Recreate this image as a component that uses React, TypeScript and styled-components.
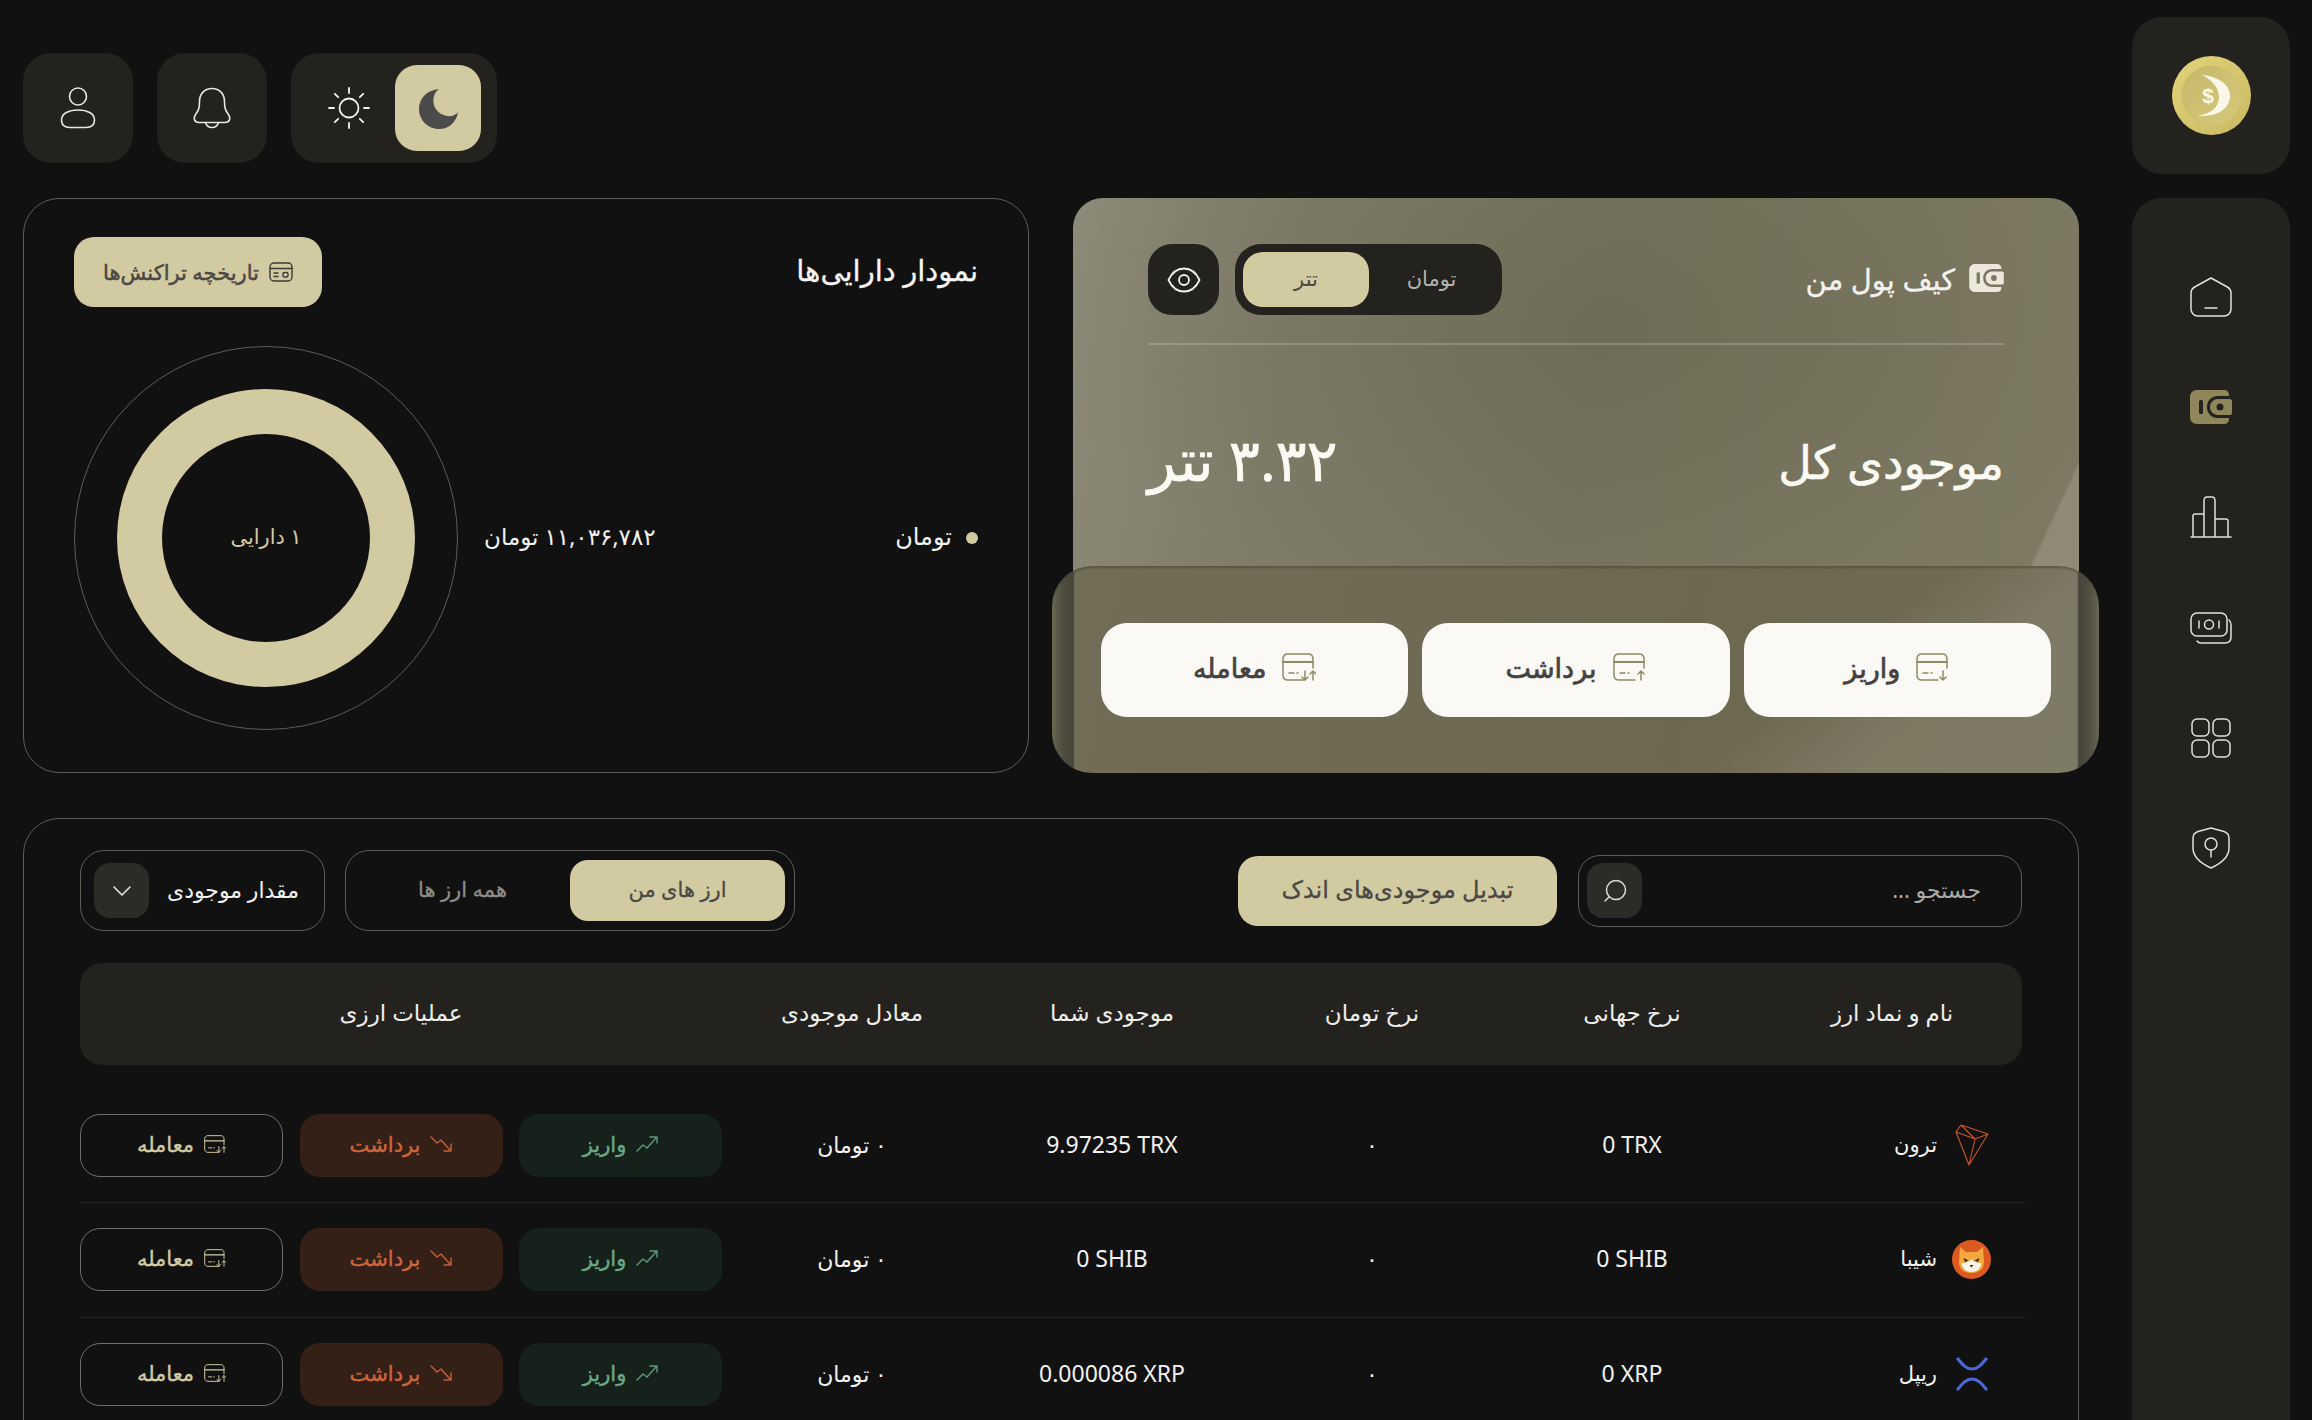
import React from "react";
import styled, { createGlobalStyle } from "styled-components";

const FONT = `"Noto Sans", "DejaVu Sans", sans-serif`;
const ACCENT = "#d2cba2";
const PANEL = "#23221e";
const LINE = "#5c5c58";

const Global = createGlobalStyle`
  html, body { margin: 0; padding: 0; background: #111111; overflow: hidden; }
  body { font-family: ${FONT}; color: #f2f2f0; }
  * { box-sizing: border-box; }
`;

const Page = styled.div`
  direction: rtl;
  width: 2312px;
  height: 1420px;
  overflow: hidden;
  display: grid;
  grid-template-columns: 158px 2056px;
  column-gap: 53px;
  padding: 17px 22px 0 23px;
  background: #111111;
`;

const Sidebar = styled.aside`
  display: flex;
  flex-direction: column;
  gap: 24px;
  height: 1500px;
`;

const LogoCard = styled.div`
  height: 157px;
  border-radius: 30px;
  background: ${PANEL};
  display: flex;
  align-items: center;
  justify-content: center;
`;

const NavCard = styled.nav`
  flex: 1;
  border-radius: 30px;
  background: ${PANEL};
  padding-top: 77px;
  display: flex;
  flex-direction: column;
  align-items: center;
  gap: 66.2px;
`;

const NavSlot = styled.div`
  width: 44px;
  height: 44px;
  display: flex;
  align-items: center;
  justify-content: center;
`;

const Main = styled.main`
  padding-top: 36px;
  display: flex;
  flex-direction: column;
`;

const Header = styled.header`
  height: 110px;
  display: flex;
  gap: 24px;
  justify-content: flex-end;
  margin-bottom: 35px;
`;

const IconTile = styled.button`
  width: 110px;
  height: 110px;
  border: 0;
  padding: 0;
  border-radius: 28px;
  background: ${PANEL};
  display: flex;
  align-items: center;
  justify-content: center;
`;

const ThemeTile = styled.div`
  width: 206px;
  height: 110px;
  border-radius: 28px;
  background: ${PANEL};
  padding: 12px 16px 12px 12px;
  display: flex;
  align-items: center;
`;

const MoonBox = styled.div`
  width: 86px;
  height: 86px;
  border-radius: 22px;
  background: ${ACCENT};
  display: flex;
  align-items: center;
  justify-content: center;
`;

const SunBox = styled.div`
  flex: 1;
  display: flex;
  align-items: center;
  justify-content: center;
`;

const TopRow = styled.section`
  height: 575px;
  display: grid;
  grid-template-columns: 1006px 1006px;
  column-gap: 44px;
  margin-bottom: 45px;
`;

const WalletCard = styled.div`
  border-radius: 30px;
  display: flex;
  flex-direction: column;
  background:
    linear-gradient(115deg, transparent 88.5%, rgba(255, 255, 255, 0.13) 88.8%),
    radial-gradient(ellipse 560px 300px at 52% 22%, rgba(60, 58, 35, 0.16), transparent 100%),
    linear-gradient(100deg, #8c8a78 0%, #7f7c68 22%, #787660 50%, #7e7a63 100%);
`;

const WalletTop = styled.div`
  flex: 1;
  padding: 46px 75px 0;
  display: flex;
  flex-direction: column;
`;

const WalletHead = styled.div`
  height: 71px;
  display: flex;
  align-items: center;
  justify-content: space-between;
`;

const WalletTitle = styled.div`
  display: flex;
  align-items: center;
  gap: 14px;
  font-size: 29px;
  -webkit-text-stroke: 0.3px currentColor;
  padding-bottom: 3px;
`;

const Controls = styled.div`
  display: flex;
  gap: 16px;
`;

const Segment = styled.div`
  width: 267px;
  height: 71px;
  border-radius: 26px;
  background: ${PANEL};
  padding: 8px;
  display: flex;
  align-items: center;
`;

const SegmentItem = styled.div<{ $active?: boolean }>`
  flex: ${(p) => (p.$active ? "0 0 126px" : "1")};
  height: 55px;
  border-radius: 20px;
  background: ${(p) => (p.$active ? ACCENT : "transparent")};
  color: ${(p) => (p.$active ? "#4a4845" : "#b4b4ae")};
  font-size: 21px;
  padding-bottom: 3px;
  display: flex;
  align-items: center;
  justify-content: center;
`;

const EyeButton = styled.button`
  width: 71px;
  height: 71px;
  border: 0;
  padding: 0;
  border-radius: 24px;
  background: ${PANEL};
  display: flex;
  align-items: center;
  justify-content: center;
`;

const Divider = styled.div`
  height: 2px;
  margin-top: 28px;
  background: rgba(255, 255, 255, 0.18);
`;

const Balance = styled.div`
  flex: 1;
  display: flex;
  align-items: center;
  justify-content: space-between;
  padding-top: 6px;
`;

const BalanceLabel = styled.div`
  font-size: 46px;
  color: #fbfaf5;
  -webkit-text-stroke: 0.6px currentColor;
  padding-top: 4px;
`;

const BalanceValue = styled.div`
  font-size: 58px;
  color: #fbfaf5;
  -webkit-text-stroke: 0.7px currentColor;
`;

const Glass = styled.div`
  height: 207px;
  margin: 0 -20px 0 -21px;
  padding: 0 48px 0 49px;
  border-radius: 40px;
  display: grid;
  grid-template-columns: repeat(3, 1fr);
  column-gap: 14px;
  align-items: center;
  background:
    linear-gradient(
      90deg,
      #6d6c5a 0,
      #5a5949 5px,
      #4d4c3e 12px,
      #454438 21px,
      transparent 23px,
      transparent calc(100% - 22px),
      #454438 calc(100% - 20px),
      #4d4c3e calc(100% - 12px),
      #5a5949 calc(100% - 5px),
      #6d6c5a 100%
    ),
    linear-gradient(141deg, transparent 69%, rgba(255, 255, 255, 0.1) 81%),
    linear-gradient(100deg, #716d56 0%, #6d6951 60%, #6f6b54 100%);
  box-shadow: inset 0 2px 2px rgba(70, 66, 44, 0.5);
`;

const ActionButton = styled.button`
  height: 94px;
  border: 0;
  border-radius: 26px;
  background: #faf9f5;
  color: #444241;
  font-family: ${FONT};
  font-size: 27px;
  -webkit-text-stroke: 0.7px currentColor;
  padding: 0 0 5px;
  display: flex;
  align-items: center;
  justify-content: center;
  gap: 16px;
`;

const AssetCard = styled.div`
  border: 1px solid ${LINE};
  border-radius: 36px;
  padding: 38px 50px 0;
  display: flex;
  flex-direction: column;
  gap: 39px;
`;

const AssetHead = styled.div`
  height: 70px;
  display: flex;
  align-items: center;
  justify-content: space-between;
`;

const AssetTitle = styled.h2`
  margin: 0 0 5px;
  font-size: 29px;
  font-weight: 400;
  -webkit-text-stroke: 0.3px currentColor;
  color: #f7f7f5;
`;

const HistoryButton = styled.button`
  width: 248px;
  height: 70px;
  border: 0;
  border-radius: 20px;
  background: ${ACCENT};
  color: #4a4845;
  font-family: ${FONT};
  font-size: 21px;
  -webkit-text-stroke: 0.5px currentColor;
  padding: 0;
  display: flex;
  align-items: center;
  justify-content: center;
  gap: 10px;
`;

const ChartRow = styled.div`
  display: flex;
  align-items: center;
  justify-content: space-between;
`;

const Legend = styled.div`
  display: flex;
  align-items: center;
  gap: 14px;
  font-size: 24px;
  padding-bottom: 5px;
`;

const Dot = styled.span`
  width: 12px;
  height: 12px;
  border-radius: 50%;
  margin-top: 5px;
  background: ${ACCENT};
`;

const ChartGroup = styled.div`
  display: flex;
  align-items: center;
  gap: 26px;
  font-size: 23px;
`;

const ChartValue = styled.span`
  padding-bottom: 5px;
`;

const DonutOuter = styled.div`
  width: 384px;
  height: 384px;
  border-radius: 50%;
  border: 1px solid ${LINE};
  display: flex;
  align-items: center;
  justify-content: center;
`;

const DonutRing = styled.div`
  width: 298px;
  height: 298px;
  border-radius: 50%;
  background: ${ACCENT};
  display: flex;
  align-items: center;
  justify-content: center;
`;

const DonutHole = styled.div`
  width: 208px;
  height: 208px;
  border-radius: 50%;
  background: #111111;
  color: ${ACCENT};
  font-size: 21px;
  padding-bottom: 4px;
  display: flex;
  align-items: center;
  justify-content: center;
`;

const TableCard = styled.section`
  border: 1px solid ${LINE};
  border-radius: 36px;
  padding: 31px 56px 60px;
  height: 800px;
`;

const Toolbar = styled.div`
  height: 81px;
  display: flex;
  align-items: center;
  margin-bottom: 32px;
`;

const SearchBox = styled.div`
  width: 444px;
  height: 72px;
  border: 1px solid ${LINE};
  border-radius: 22px;
  padding: 0 40px 0 8px;
  display: flex;
  align-items: center;
  justify-content: space-between;
  color: #aaaaa6;
  font-size: 22px;
`;

const LiftedText = styled.span`
  padding-bottom: 3px;
`;

const SquareIcon = styled.div`
  width: 55px;
  height: 55px;
  border-radius: 16px;
  background: #2b2b27;
  display: flex;
  align-items: center;
  justify-content: center;
`;

const ConvertButton = styled.button`
  width: 319px;
  height: 70px;
  margin-right: 21px;
  border: 0;
  border-radius: 20px;
  background: ${ACCENT};
  color: #4a4845;
  font-family: ${FONT};
  font-size: 24px;
  padding: 0 0 4px;
  -webkit-text-stroke: 0.3px currentColor;
`;

const Tabs = styled.div`
  width: 450px;
  height: 81px;
  margin-right: auto;
  border: 1px solid ${LINE};
  border-radius: 24px;
  padding: 9px;
  display: flex;
  align-items: center;
`;

const TabItem = styled.div<{ $active?: boolean }>`
  flex: ${(p) => (p.$active ? "0 0 215px" : "1")};
  height: 61px;
  border-radius: 18px;
  background: ${(p) => (p.$active ? ACCENT : "transparent")};
  color: ${(p) => (p.$active ? "#4a4845" : "#8c8c88")};
  font-size: 21px;
  -webkit-text-stroke: 0.3px currentColor;
  padding-bottom: 3px;
  display: flex;
  align-items: center;
  justify-content: center;
`;

const SelectBox = styled.div`
  width: 245px;
  height: 81px;
  margin-right: 20px;
  border: 1px solid ${LINE};
  border-radius: 24px;
  padding: 0 25px 0 13px;
  display: flex;
  align-items: center;
  justify-content: space-between;
  font-size: 22px;
`;

const TableGrid = styled.div`
  display: grid;
  grid-template-columns: repeat(5, 260px) 1fr;
  align-items: center;
`;

const TableHead = styled(TableGrid)`
  height: 102px;
  margin-bottom: 23.5px;
  border-radius: 22px;
  background: ${PANEL};
  font-size: 23px;
  color: #eeeeea;
  padding-bottom: 5px;
`;

const HeadCell = styled.div`
  text-align: center;
`;

const Row = styled(TableGrid)`
  height: 114.5px;
  margin-right: -3px;
  padding-right: 3px;
  border-bottom: 1px solid #262624;
  font-size: 22px;
`;

const Cell = styled.div`
  text-align: center;
  padding-bottom: 3px;
`;

const LatinCell = styled.div`
  direction: ltr;
  text-align: center;
  font-size: 23px;
  padding-bottom: 3px;
`;

const NameCell = styled.div`
  display: flex;
  align-items: center;
  gap: 15px;
  padding-right: 31px;
  font-size: 21px;
`;

const CoinIcon = styled.div`
  width: 39px;
  height: 39px;
  display: flex;
  align-items: center;
  justify-content: center;
`;

const Ops = styled.div`
  display: grid;
  grid-template-columns: 203px 203px 203px;
  justify-content: space-between;
`;

const OpButton = styled.button<{ $kind: "in" | "out" | "trade" }>`
  height: 63px;
  border-radius: 20px;
  font-family: ${FONT};
  font-size: 21px;
  -webkit-text-stroke: 0.4px currentColor;
  padding: 0 0 3px;
  display: flex;
  align-items: center;
  justify-content: center;
  gap: 10px;
  border: ${(p) => (p.$kind === "trade" ? `1px solid #6e6e6a` : "0")};
  background: ${(p) =>
    p.$kind === "in" ? "#17211c" : p.$kind === "out" ? "#352018" : "transparent"};
  color: ${(p) =>
    p.$kind === "in" ? "#6aa985" : p.$kind === "out" ? "#d0653c" : ACCENT};
`;

const stroke = { fill: "none", strokeLinecap: "round", strokeLinejoin: "round" } as const;

const UserIcon = () => (
  <svg width="36" height="42" viewBox="0 0 36 42" {...stroke} stroke="#e6e6e2" strokeWidth="1.6">
    <ellipse cx="18" cy="9.5" rx="8.5" ry="8.5" />
    <path d="M18 23c-9 0-16.5 3.5-16.5 10C1.500 38 5 40.500 10 40.500h16c5 0 8.500-2.500 8.500-7.500 0-6.500-7.500-10-16.500-10Z" />
  </svg>
);

const BellIcon = () => (
  <svg width="40" height="42" viewBox="0 0 40 42" {...stroke} stroke="#e6e6e2" strokeWidth="1.6">
    <path d="M20 1.500C12 1.500 7.500 7.500 7.500 14.500c0 7-1 9-4 13-2.500 3.500-1.500 8 3.500 8h26c5 0 6-4.500 3.500-8-3-4-4-6-4-13C32.500 7.500 28 1.500 20 1.500Z" />
    <path d="M13.500 35.500c1 3.500 3.500 5 6.500 5s5.500-1.500 6.500-5" />
  </svg>
);

const SunIcon = () => (
  <svg width="42" height="42" viewBox="0 0 42 42" {...stroke} stroke="#f1f1ee" strokeWidth="1.8">
    <circle cx="21" cy="21" r="9.500" />
    <path d="M21 1v5M21 36v5M1 21h5M36 21h5M6.800 6.800l3.400 3.400M31.800 31.800l3.400 3.400M6.800 35.200l3.400-3.400M31.800 10.200l3.400-3.400" />
  </svg>
);

const MoonIcon = () => (
  <svg width="40" height="41" viewBox="0 0 40 41">
    <path
      fill="#4b4b4c"
      d="M21 1C9.500 2 1 10 1 21c0 11 9 20 20 20 9.500 0 17-6 19-16.500-3.500 3.500-8.500 4.500-13 3C20 25.500 16 20 15.500 14.500 15 8.500 17 4 21 1Z"
    />
  </svg>
);

const WalletGlyph = ({ color, w, h, hole }: { color: string; w: number; h: number; hole: string }) => (
  <svg width={w} height={h} viewBox="0 0 42 34">
    <path fill={color} d="M7 0h27c3 0 5 2 5 5v1H28C21 6 17 11 17 17s4 11 11 11h11v1c0 3-2 5-5 5H7c-4 0-7-3-7-7V7c0-4 3-7 7-7Z" />
    <rect x="9" y="10" width="4" height="14" rx="1.500" fill={hole} />
    <path fill={color} d="M28 9h12c1 0 2 1 2 2v12c0 1-1 2-2 2H28c-4 0-8-3-8-8s4-8 8-8Z" />
    <circle cx="30" cy="17" r="3.500" fill={hole} />
  </svg>
);

const EyeIcon = () => (
  <svg width="34" height="26" viewBox="0 0 34 26" {...stroke} stroke="#f1f1ee" strokeWidth="1.8">
    <path d="M1.500 13C5 5.500 10.500 1.500 17 1.500S29 5.500 32.500 13C29 20.500 23.500 24.500 17 24.500S5 20.500 1.500 13Z" />
    <circle cx="17" cy="13" r="5" />
  </svg>
);

type Arrow = "down" | "up" | "both";

const CardArrow = ({ dir, color, w = 34, h = 28 }: { dir: Arrow; color: string; w?: number; h?: number }) => (
  <svg width={w} height={h} viewBox="0 0 34 28" {...stroke} stroke={color} strokeWidth="1.500">
    <path d="M22 27H6c-3 0-5-2-5-5V6c0-3 2-5 5-5h20c3 0 5 2 5 5v9" />
    <path d="M1 9h30" strokeWidth="2" />
    <path d="M7 20h5M15 20h1" />
    {dir !== "up" && <path d="M25 27v-9M22 24l3 3 3-3" transform={dir === "both" ? "translate(-2 0)" : "translate(2 0)"} />}
    {dir !== "down" && <path d="M30 27v-9M27 21l3-3 3 3" transform={dir === "both" ? "translate(1 0)" : "translate(-2 0)"} />}
  </svg>
);

const HistoryIcon = () => (
  <svg width="24" height="20" viewBox="0 0 24 20" {...stroke} stroke="#3c3a36" strokeWidth="1.400">
    <rect x="1" y="1" width="22" height="18" rx="4" />
    <path d="M1 6.500h22M5 11h4M5 14.500h4" />
    <rect x="14" y="10.500" width="5" height="4.500" rx="1.500" />
  </svg>
);

const SearchIcon = () => (
  <svg width="24" height="24" viewBox="0 0 24 24" {...stroke} stroke="#ddddd8" strokeWidth="1.500">
    <circle cx="13" cy="11" r="9.500" />
    <path d="M6 18l-4 4" />
  </svg>
);

const ChevronIcon = () => (
  <svg width="20" height="12" viewBox="0 0 20 12" {...stroke} stroke="#e6e6e2" strokeWidth="1.600">
    <path d="M2 2l8 8 8-8" />
  </svg>
);

const TrendUp = () => (
  <svg width="22" height="16" viewBox="0 0 22 16" {...stroke} stroke="#5d9a78" strokeWidth="1.400">
    <path d="M1 15l6-6 4 3 9-10M14 1h7v6" />
  </svg>
);

const TrendDown = () => (
  <svg width="22" height="16" viewBox="0 0 22 16" {...stroke} stroke="#c55f38" strokeWidth="1.400">
    <path d="M1 1l6 6 4-3 9 10M14 15h7V8" />
  </svg>
);

const LogoMark = () => (
  <svg width="79" height="79" viewBox="0 0 79 79">
    <defs>
      <linearGradient id="coinEdge" x1="0" y1="0" x2="1" y2="1">
        <stop offset="0" stopColor="#e2d37a" />
        <stop offset="1" stopColor="#c9b962" />
      </linearGradient>
      <linearGradient id="coinFace" x1="0" y1="0" x2="1" y2="1">
        <stop offset="0" stopColor="#c4b86a" />
        <stop offset="1" stopColor="#d6c97c" />
      </linearGradient>
    </defs>
    <circle cx="39.500" cy="39.500" r="39.500" fill="url(#coinEdge)" />
    <circle cx="39.500" cy="39.500" r="30" fill="url(#coinFace)" />
    <path
      fill="#fbf8ea"
      d="M30 19C42 20 58 26 58 40 58 53 45 61 25 60 38 58 47 52 47 41 47 32 40 24 30 19Z"
    />
    <text x="36" y="47" fontSize="21" fontWeight="700" fill="#fbf8ea" fontFamily="Liberation Sans, sans-serif" textAnchor="middle" direction="ltr">$</text>
  </svg>
);

const HomeNav = () => (
  <svg width="42" height="40" viewBox="0 0 42 40" {...stroke} stroke="#e0e0dc" strokeWidth="1.500">
    <path d="M21 1 5.500 9.500C2.500 11 1 13 1 16v16c0 4 3 7 7 7h26c4 0 7-3 7-7V16c0-3-1.500-5-4.500-6.500L21 1Z" />
    <path d="M15 31h12" />
  </svg>
);

const BarsNav = () => (
  <svg width="42" height="42" viewBox="0 0 42 42" {...stroke} stroke="#e0e0dc" strokeWidth="1.500">
    <path d="M1 41h40M3 41V20c0-1 1-2 2-2h9M14 41V5c0-2 1-4 3-4h5c2 0 3 2 3 4v36M25 23h11c1 0 2 1 2 2v16" />
  </svg>
);

const MoneyNav = () => (
  <svg width="42" height="32" viewBox="0 0 42 32" {...stroke} stroke="#e0e0dc" strokeWidth="1.500">
    <rect x="1" y="1" width="36" height="23" rx="6" />
    <circle cx="19" cy="12.500" r="4.500" />
    <path d="M9 9v7M29 9v7M7 29c1 1.500 2 2 4 2h24c4 0 6-2.500 6-6V13c0-2-1-4-2-5" />
  </svg>
);

const GridNav = () => (
  <svg width="40" height="40" viewBox="0 0 40 40" {...stroke} stroke="#e0e0dc" strokeWidth="1.500">
    <rect x="1" y="1" width="17" height="17" rx="5" />
    <rect x="22" y="1" width="17" height="17" rx="5" />
    <rect x="1" y="22" width="17" height="17" rx="5" />
    <rect x="22" y="22" width="17" height="17" rx="5" />
  </svg>
);

const ShieldNav = () => (
  <svg width="38" height="42" viewBox="0 0 38 42" {...stroke} stroke="#e0e0dc" strokeWidth="1.500">
    <path d="M19 1 6 4.500C3 5.500 1 7.500 1 11v10c0 9 7 15 18 20 11-5 18-11 18-20V11c0-3.500-2-5.500-5-6.500L19 1Z" />
    <circle cx="19" cy="17" r="6" />
    <path d="M19 23v7" />
  </svg>
);

const TronIcon = () => (
  <svg width="34" height="42" viewBox="0 0 34 42" {...stroke} stroke="#c9552a" strokeWidth="1.100">
    <path d="M6 1 33 10 14 41 1 8 6 1ZM6 1l14 14L33 10M20 15 14 41M1 8l19 7" />
  </svg>
);

const ShibaIcon = () => (
  <svg width="39" height="39" viewBox="0 0 39 39">
    <circle cx="19.500" cy="19.500" r="19.500" fill="#dc5a22" />
    <path fill="#f3a73c" d="M8 7l6 5h11l6-5 1 15c0 7-5 11-12.500 11S7 29 7 22L8 7Z" />
    <path fill="#fdf6ea" d="M19.500 19c-2 2-4 4-10 4 1 6 5 9 10 9s9-3 10-9c-6 0-8-2-10-4Z" />
    <path fill="#3a2416" d="M11.500 18l5 2.500-3.500 1.500zM27.500 18l-5 2.500 3.500 1.500z" />
    <path fill="#3a2416" d="M17.500 25h4l-2 2.500z" />
  </svg>
);

const XrpIcon = () => (
  <svg width="32" height="34" viewBox="0 0 32 34" {...stroke} stroke="#4d66d6" strokeWidth="3.200">
    <path d="M2 2c4 5 8 10 14 10S26 7 30 2M2 32c4-5 8-10 14-10s10 5 14 10" />
  </svg>
);

const rows = [
  { name: "ترون", icon: <TronIcon />, world: "0 TRX", balance: "9.97235 TRX" },
  { name: "شیبا", icon: <ShibaIcon />, world: "0 SHIB", balance: "0 SHIB" },
  { name: "ریپل", icon: <XrpIcon />, world: "0 XRP", balance: "0.000086 XRP" },
];

const columns = ["نام و نماد ارز", "نرخ جهانی", "نرخ تومان", "موجودی شما", "معادل موجودی", "عملیات ارزی"];

export default function App() {
  return (
    <Page>
      <Global />
      <Sidebar>
        <LogoCard>
          <LogoMark />
        </LogoCard>
        <NavCard>
          <NavSlot><HomeNav /></NavSlot>
          <NavSlot><WalletGlyph color="#8f8759" hole="#23221e" w={42} h={34} /></NavSlot>
          <NavSlot><BarsNav /></NavSlot>
          <NavSlot><MoneyNav /></NavSlot>
          <NavSlot><GridNav /></NavSlot>
          <NavSlot><ShieldNav /></NavSlot>
        </NavCard>
      </Sidebar>
      <Main>
        <Header>
          <ThemeTile>
            <MoonBox><MoonIcon /></MoonBox>
            <SunBox><SunIcon /></SunBox>
          </ThemeTile>
          <IconTile><BellIcon /></IconTile>
          <IconTile><UserIcon /></IconTile>
        </Header>
        <TopRow>
          <WalletCard>
            <WalletTop>
              <WalletHead>
                <WalletTitle>
                  <WalletGlyph color="#ece9dc" hole="#7d7a66" w={35} h={28} />
                  <span>کیف پول من</span>
                </WalletTitle>
                <Controls>
                  <Segment>
                    <SegmentItem>تومان</SegmentItem>
                    <SegmentItem $active>تتر</SegmentItem>
                  </Segment>
                  <EyeButton><EyeIcon /></EyeButton>
                </Controls>
              </WalletHead>
              <Divider />
              <Balance>
                <BalanceLabel>موجودی کل</BalanceLabel>
                <BalanceValue>۳.۳۲ تتر</BalanceValue>
              </Balance>
            </WalletTop>
            <Glass>
              <ActionButton><CardArrow dir="down" color="#8f8a64" /><span>واریز</span></ActionButton>
              <ActionButton><CardArrow dir="up" color="#8f8a64" /><span>برداشت</span></ActionButton>
              <ActionButton><CardArrow dir="both" color="#8f8a64" /><span>معامله</span></ActionButton>
            </Glass>
          </WalletCard>
          <AssetCard>
            <AssetHead>
              <AssetTitle>نمودار دارایی‌ها</AssetTitle>
              <HistoryButton><HistoryIcon /><span>تاریخچه تراکنش‌ها</span></HistoryButton>
            </AssetHead>
            <ChartRow>
              <Legend><Dot /><span>تومان</span></Legend>
              <ChartGroup>
                <ChartValue>۱۱,۰۳۶,۷۸۲ تومان</ChartValue>
                <DonutOuter>
                  <DonutRing>
                    <DonutHole>۱ دارایی</DonutHole>
                  </DonutRing>
                </DonutOuter>
              </ChartGroup>
            </ChartRow>
          </AssetCard>
        </TopRow>
        <TableCard>
          <Toolbar>
            <SearchBox>
              <LiftedText>جستجو ...</LiftedText>
              <SquareIcon><SearchIcon /></SquareIcon>
            </SearchBox>
            <ConvertButton>تبدیل موجودی‌های اندک</ConvertButton>
            <Tabs>
              <TabItem $active>ارز های من</TabItem>
              <TabItem>همه ارز ها</TabItem>
            </Tabs>
            <SelectBox>
              <LiftedText>مقدار موجودی</LiftedText>
              <SquareIcon><ChevronIcon /></SquareIcon>
            </SelectBox>
          </Toolbar>
          <TableHead>
            {columns.map((c) => (
              <HeadCell key={c}>{c}</HeadCell>
            ))}
          </TableHead>
          {rows.map((r) => (
            <Row key={r.name}>
              <NameCell>
                <CoinIcon>{r.icon}</CoinIcon>
                <LiftedText>{r.name}</LiftedText>
              </NameCell>
              <LatinCell>{r.world}</LatinCell>
              <Cell>۰</Cell>
              <LatinCell>{r.balance}</LatinCell>
              <Cell>۰ تومان</Cell>
              <Ops>
                <OpButton $kind="in"><TrendUp /><span>واریز</span></OpButton>
                <OpButton $kind="out"><TrendDown /><span>برداشت</span></OpButton>
                <OpButton $kind="trade"><CardArrow dir="both" color={ACCENT} w={22} h={18} /><span>معامله</span></OpButton>
              </Ops>
            </Row>
          ))}
        </TableCard>
      </Main>
    </Page>
  );
}
